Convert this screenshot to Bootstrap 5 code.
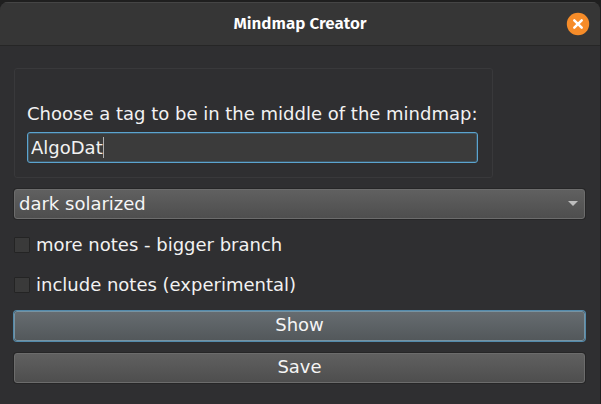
<!DOCTYPE html>
<html lang="en">
<head>
<meta charset="utf-8">
<meta name="viewport" content="width=device-width, initial-scale=1">
<title>Mindmap Creator</title>
<link href="https://cdn.jsdelivr.net/npm/bootstrap@5.3.0/dist/css/bootstrap.min.css" rel="stylesheet">
<style>
body { background: #1f1f1f; color: #f2f2f2; font-family: "DejaVu Sans", sans-serif; font-size: 18px; line-height: 24px; }
.dialog-window { margin-top: 2px; margin-right: 1px; background: #2f2f31; border-radius: 8px 8px 0 0; overflow: hidden; min-height: calc(100vh - 2px); }
.title-bar { height: 44px; background: #363636; border-top: 1px solid #454545; border-bottom: 1px solid #262626; padding: 0 10px; }
.title-bar h1 { font: 600 17px/24px "Fira Sans", "Noto Sans", sans-serif; color: #fff; }
.close-btn { width: 24px; height: 24px; }
.close-btn svg { display: block; }
.dialog-body { padding: 22px 15px 20px 14px; }
.tag-group { width: fit-content; max-width: 100%; border: 1px solid #39393b; border-radius: 3px; padding: 33px 14px 14px 12px; margin-bottom: 11px; }
.tag-group label { margin-bottom: 6px; }
.tag-input, .tag-input:focus { height: 31px; background: #3b3b3b; color: #f2f2f2; border: 1px solid #5ba4cf; border-radius: 3px; padding: 0 3px; font-size: 18px; box-shadow: inset 0 0 0 1px #3f5563; }
.text-caret { left: 76px; top: 5px; width: 1px; height: 21px; background: #b0b0b0; }
.raised { height: 30px; color: #f5f5f5; background: linear-gradient(#606060, #4e4e4e); border: 1px solid #6c6c6c; border-radius: 3px; box-shadow: 0 0 0 1px #262627; font-size: 18px; line-height: 24px; padding: 0 4px; }
.theme-select { background: url("data:image/svg+xml,%3Csvg xmlns='http://www.w3.org/2000/svg' viewBox='0 0 10 6'%3E%3Cpath fill='%23bdbdbd' d='M0 0h10L5 5z'/%3E%3C/svg%3E") no-repeat right 6px center / 10px 6px, linear-gradient(#606060, #4e4e4e); }
.option-list { display: grid; gap: 16px; margin: 14px 0; }
.option-row { gap: 6px; height: 24px; }
.option-row .form-check-input { width: 16px; height: 16px; background-color: #3a3a3a; border: 1px solid #242424; border-radius: 1px; }
.action-list { gap: 12px; }
.action-list .raised { padding-bottom: 2px; }
.raised.is-default { background: linear-gradient(#666c70, #53585b); border-color: #7793a2; box-shadow: 0 0 0 1px #5289aa; }
</style>
</head>
<body>
<main class="dialog-window">
  <header class="title-bar d-flex align-items-center">
    <span class="close-btn flex-shrink-0"></span>
    <h1 class="flex-grow-1 text-center m-0">Mindmap Creator</h1>
    <button type="button" class="close-btn btn p-0 border-0 flex-shrink-0" aria-label="Close">
      <svg width="24" height="24" viewBox="0 0 24 24" aria-hidden="true"><circle cx="12" cy="12" r="11.2" fill="#f68c29"/><path d="M8.3 8.3l7.4 7.4M15.7 8.3l-7.4 7.4" stroke="#fff" stroke-width="2.5" stroke-linecap="round"/></svg>
    </button>
  </header>
  <form class="dialog-body">
    <div class="tag-group">
      <label class="d-block" for="tag">Choose a tag to be in the middle of the mindmap:</label>
      <div class="position-relative">
        <input id="tag" type="text" class="form-control tag-input" value="AlgoDat">
        <span class="text-caret position-absolute" aria-hidden="true"></span>
      </div>
    </div>
    <select class="form-select raised theme-select" aria-label="Theme">
      <option selected>dark solarized</option>
    </select>
    <div class="option-list">
      <div class="option-row d-flex align-items-center">
        <input class="form-check-input m-0" type="checkbox" id="more">
        <label for="more">more notes - bigger branch</label>
      </div>
      <div class="option-row d-flex align-items-center">
        <input class="form-check-input m-0" type="checkbox" id="include">
        <label for="include">include notes (experimental)</label>
      </div>
    </div>
    <div class="action-list d-grid">
      <button type="submit" class="btn raised is-default">Show</button>
      <button type="button" class="btn raised">Save</button>
    </div>
  </form>
</main>
<script src="https://cdn.jsdelivr.net/npm/bootstrap@5.3.0/dist/js/bootstrap.bundle.min.js"></script>
</body>
</html>
